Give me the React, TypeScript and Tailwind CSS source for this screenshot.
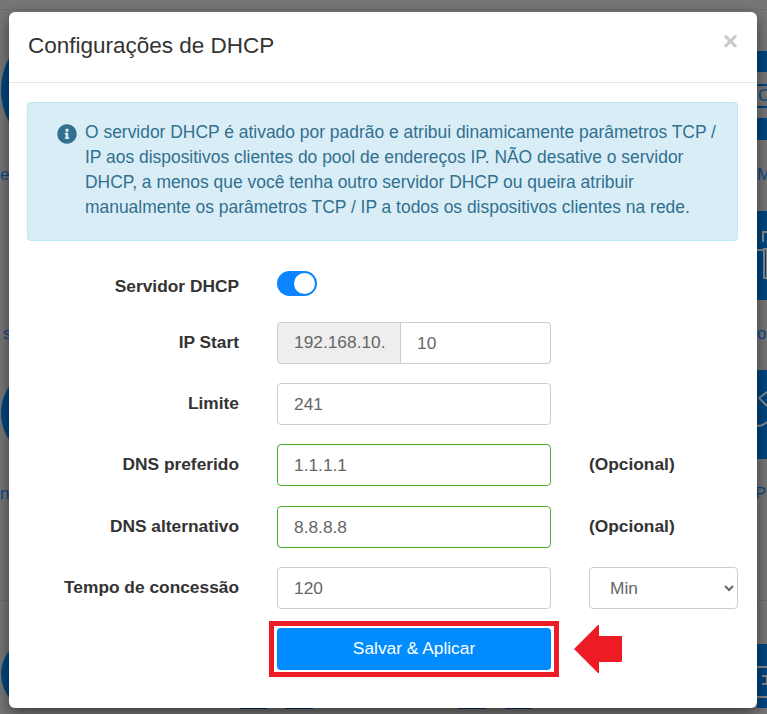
import { FaInfoCircle } from 'react-icons/fa';

const inputClass = 'h-[42px] w-full rounded-[4px] border border-[#ccc] bg-white px-4 text-[17.33px] text-[#666] outline-none';
const validClass = 'h-[42px] w-full rounded-[4px] border border-[#4cae2f] bg-white px-4 text-[17.33px] text-[#666] outline-none';
const labelClass = 'text-right text-[17.33px] font-bold text-[#333]';
const optionalClass = 'text-[17.33px] font-bold text-[#333]';
const rowClass = 'grid grid-cols-[212px_274px_149px] items-center gap-x-[38px]';

// the dimmed page behind the modal, only its edges show
function PageBehind() {
    return (
        <div className="absolute inset-0 overflow-hidden bg-[#777] text-[17px] leading-[20px] text-[#0b4a8a]">
            <div className="mt-[9px] h-px w-full bg-[#6c6c6c]" />
            <div className="mt-[590px] h-px w-full bg-[#6c6c6c]" />

            <div className="absolute left-0 top-0 flex flex-col items-start pl-px">
                <div className="mt-[22px] h-[136px] w-[136px] rounded-full bg-[#004680]" />
                <span className="mt-[7px] -ml-px">e</span>
                <span className="ml-[2px] mt-[139px]">s</span>
                <div className="mt-[21px] h-[96px] w-[96px] rounded-full bg-[#004680]" />
                <span className="mt-[23px] -ml-px">nl</span>
                <div className="mt-[132px] h-[72px] w-[76px] overflow-hidden">
                    <div className="h-[76px] w-[76px] rounded-full bg-[#004680]" />
                </div>
            </div>

            <div className="absolute left-[240px] top-[708px] flex">
                <div className="h-px w-[27px] bg-[#00356b]" />
                <div className="ml-[18px] h-px w-[28px] bg-[#00356b]" />
                <div className="ml-[145px] h-px w-[28px] bg-[#00356b]" />
                <div className="ml-[19px] h-px w-[27px] bg-[#00356b]" />
            </div>

            <div className="absolute left-[757px] top-0 flex w-[10px] flex-col whitespace-nowrap">
                <div className="mt-[51px] h-[21px] bg-[#004680]" />
                <div className="mt-[12px] h-[24px] border-y-2 border-[#004680] pl-px">C</div>
                <div className="mt-[10px] h-[22px] bg-[#004680]" />
                <span className="mt-[25px]">M</span>
                <svg className="mt-[26px] h-[89px] w-[10px]" viewBox="0 0 10 89">
                    <rect width="10" height="89" fill="#004680" />
                    <path d="M6 31V21H10M0 39H8M7 38H10V67H7Z" fill="none" stroke="#8a8a8a" strokeWidth="2" />
                </svg>
                <span className="mt-[24px]">or</span>
                <svg className="mt-[26px] h-[89px] w-[10px]" viewBox="0 0 10 89">
                    <rect width="10" height="89" fill="#004680" />
                    <path d="M0 56Q6 56 10 52M2 28L10 36M2 28L10 22" fill="none" stroke="#8a8a8a" strokeWidth="2" />
                </svg>
                <span className="mt-[25px] -ml-[2px]">Pr</span>
                <svg className="mt-[140px] h-[64px] w-[10px]" viewBox="0 0 10 64">
                    <rect width="10" height="64" fill="#004680" />
                    <path d="M0 23H10M0 53H10M5 32H10V40H5" fill="none" stroke="#8a8a8a" strokeWidth="2" />
                </svg>
            </div>
        </div>
    );
}

export default function App() {
    return (
        <div className="relative h-[714px] w-[767px] overflow-hidden font-['Liberation_Sans',Arial,sans-serif]">
            <PageBehind />

            <div className="relative ml-[9px] mt-[12px] h-[696px] w-[748px] rounded-[6px] bg-white shadow-[0_5px_15px_rgba(0,0,0,0.5)]">
                {/* Header */}
                <div className="flex h-[71px] items-center justify-between border-b border-[#e5e5e5] pl-[19px] pr-[19px]">
                    <h4 className="mb-px text-[22.5px] leading-none text-[#333]">Configurações de DHCP</h4>
                    <span className="mb-[12px] text-[26px] font-bold leading-none text-[#c9c9c9]">×</span>
                </div>

                {/* Body */}
                <div className="flex flex-col pl-[18px] pt-[19px]">
                    <div className="flex h-[139px] w-[711px] gap-[8px] rounded-[4px] border border-[#bce8f1] bg-[#d9edf7] pl-[29px] pt-[17px] text-[#31708f]">
                        <FaInfoCircle className="mt-[4px] h-[20px] w-[20px] shrink-0" />
                        <p className="w-[650px] text-[17.45px] leading-[25px]">
                            O servidor DHCP é ativado por padrão e atribui dinamicamente parâmetros TCP / IP aos dispositivos clientes do pool de endereços IP. NÃO desative o servidor DHCP, a menos que você tenha outro servidor DHCP ou queira atribuir manualmente os parâmetros TCP / IP a todos os dispositivos clientes na rede.
                        </p>
                    </div>

                    <div className="mt-[30px] grid h-[25px] grid-cols-[212px_274px_149px] items-start gap-x-[38px]">
                        <label className={`${labelClass} pt-[5px] leading-[20px]`}>Servidor DHCP</label>
                        <div className="flex h-[25px] w-[40px] items-center justify-end rounded-full bg-[#0a84ff] pr-[2px]">
                            <div className="h-[21px] w-[21px] rounded-full bg-white" />
                        </div>
                    </div>

                    <div className={`mt-[26px] ${rowClass}`}>
                        <label className={labelClass}>IP Start</label>
                        <div className="flex h-[42px]">
                            <span className="flex w-[124px] items-center rounded-l-[4px] border border-[#ccc] bg-[#eee] pl-4 text-[17.33px] text-[#666]">192.168.10.</span>
                            <input readOnly value="10" className="h-[42px] min-w-0 flex-1 rounded-r-[4px] border border-l-0 border-[#ccc] bg-white px-4 text-[17.33px] text-[#666] outline-none" />
                        </div>
                    </div>

                    <div className={`mt-[19px] ${rowClass}`}>
                        <label className={labelClass}>Limite</label>
                        <input readOnly value="241" className={inputClass} />
                    </div>

                    <div className={`mt-[19px] ${rowClass}`}>
                        <label className={labelClass}>DNS preferido</label>
                        <input readOnly value="1.1.1.1" className={validClass} />
                        <span className={optionalClass}>(Opcional)</span>
                    </div>

                    <div className={`mt-[20px] ${rowClass}`}>
                        <label className={labelClass}>DNS alternativo</label>
                        <input readOnly value="8.8.8.8" className={validClass} />
                        <span className={optionalClass}>(Opcional)</span>
                    </div>

                    <div className={`mt-[19px] ${rowClass}`}>
                        <label className={labelClass}>Tempo de concessão</label>
                        <input readOnly value="120" className={inputClass} />
                        <select className="h-[42px] w-full rounded-[4px] border border-[#ccc] bg-white pl-4 text-[17.33px] text-[#666] outline-none">
                            <option>Min</option>
                        </select>
                    </div>

                    <div className={`mt-[19px] ${rowClass}`}>
                        <div />
                        <div className="relative">
                            <button className="h-[42px] w-full rounded-[4px] bg-[#008cff] text-[17.33px] text-white">Salvar &amp; Aplicar</button>
                            {/* annotation */}
                            <div className="absolute -inset-x-[8px] -inset-y-[7px] border-[5px] border-[#ed1c24]" />
                            <svg className="absolute left-[296px] top-[-4px] h-[50px] w-[50px]" viewBox="0 0 50 50">
                                <path d="M1 25 L25 1 L26 1 L26 12 L48 12 Q49 12 49 13 L49 37 Q49 38 48 38 L26 38 L26 49 L25 49 Z" fill="#ed1c24" />
                            </svg>
                        </div>
                    </div>
                </div>
            </div>
        </div>
    );
}
